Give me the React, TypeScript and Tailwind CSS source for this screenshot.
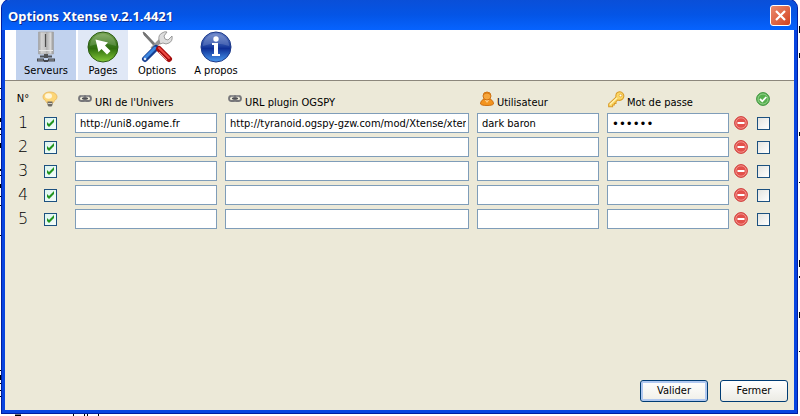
import { useState } from "react";
import type { FC, ReactNode } from "react";

interface Server {
  id: number;
  universe: string;
  plugin: string;
  user: string;
  password: string;
}

const servers: Server[] = [
  {
    id: 1,
    universe: "http://uni8.ogame.fr",
    plugin: "http://tyranoid.ogspy-gzw.com/mod/Xtense/xtense.php",
    user: "dark baron",
    password: "secret",
  },
  { id: 2, universe: "", plugin: "", user: "", password: "" },
  { id: 3, universe: "", plugin: "", user: "", password: "" },
  { id: 4, universe: "", plugin: "", user: "", password: "" },
  { id: 5, universe: "", plugin: "", user: "", password: "" },
];

const ServerIcon: FC = () => (
  <svg width="32" height="32" viewBox="0 0 32 32" aria-hidden="true">
    <defs>
      <linearGradient id="tower" x1="0" x2="1">
        <stop offset="0" stopColor="#9a9a9a" />
        <stop offset="0.2" stopColor="#d2d2d2" />
        <stop offset="0.46" stopColor="#c4c4c4" />
        <stop offset="0.54" stopColor="#b0b0b0" />
        <stop offset="0.8" stopColor="#d8d8d8" />
        <stop offset="1" stopColor="#8d8d8d" />
      </linearGradient>
    </defs>
    <path d="M8.500 1h15v22h-15z" fill="url(#tower)" stroke="#a3a3a3" strokeWidth=".6" />
    <path d="M15.500 3v13" stroke="#4c4c4c" strokeWidth="1.200" />
    <path d="M9 19.500h14" stroke="#e8e8e8" />
    <path d="M14 23h4v4h-4z" fill="#555" />
    <path d="M10 24.500h12v2H10z" fill="#4f5258" />
    <path d="M7 27.500h7v3H7zM14 29h4v2h-4zM18 27.500h7v3h-7z" fill="#43464d" />
    <path d="M8 29h5M19 29h5" stroke="#a9adb5" strokeWidth=".8" />
  </svg>
);

const PagesIcon: FC = () => (
  <svg width="32" height="32" viewBox="0 0 32 32" aria-hidden="true">
    <defs>
      <linearGradient id="green" x1="0" y1="0" x2="0" y2="1">
        <stop offset="0" stopColor="#7ba656" />
        <stop offset="0.45" stopColor="#37761a" />
        <stop offset="0.55" stopColor="#2f6e0d" />
        <stop offset="1" stopColor="#86c93c" />
      </linearGradient>
    </defs>
    <circle cx="16" cy="16" r="15" fill="url(#green)" stroke="#2b5a12" />
    <path d="M3 15a13 12 0 0 1 26 0q-13-5-26 0z" fill="#fff" opacity=".15" />
    <path d="M8.500 8.500L21 11.500l-3 3 5.500 5.500-3.500 3.500-5.500-5.500-3 3z" fill="#fff" />
  </svg>
);

const ToolsIcon: FC = () => (
  <svg width="32" height="32" viewBox="0 0 32 32" aria-hidden="true">
    <path d="M2 1l2 1 15 16-2 1L3 4z" fill="#777" stroke="#555" strokeWidth=".6" />
    <path d="M11 18l9-9" stroke="#999" strokeWidth="4" />
    <path
      d="M18 9q-1-5 3-7 3-2 5-1l-3 4 1 3 3 1 4-4q1 5-3 7-3 2-6 0l-3 1z"
      fill="#ddd"
      stroke="#888"
      strokeWidth=".8"
    />
    <path d="M4 28l11-11" stroke="#173f91" strokeWidth="6" strokeLinecap="round" />
    <path d="M4 27l10-10" stroke="#3d87e0" strokeWidth="3" strokeLinecap="round" />
    <circle cx="4" cy="28" r="1.3" fill="#dfeaff" />
    <path d="M18 18l10 10" stroke="#a60d0d" strokeWidth="6" strokeLinecap="round" />
    <path d="M18 17l10 10" stroke="#ee4a43" strokeWidth="2" strokeLinecap="round" />
    <path d="M18 21l8 8" stroke="#ffb5ae" strokeWidth=".8" />
  </svg>
);

const InfoIcon: FC = () => (
  <svg width="32" height="32" viewBox="0 0 32 32" aria-hidden="true">
    <defs>
      <linearGradient id="blue" x1="0" y1="0" x2="0" y2="1">
        <stop offset="0" stopColor="#6a85ca" />
        <stop offset="0.45" stopColor="#2346a4" />
        <stop offset="0.55" stopColor="#0e2f96" />
        <stop offset="1" stopColor="#4a9af0" />
      </linearGradient>
    </defs>
    <circle cx="16" cy="16" r="15" fill="url(#blue)" stroke="#1b3888" />
    <path d="M3 15a13 12 0 0 1 26 0q-13-5-26 0z" fill="#fff" opacity=".15" />
    <circle cx="16" cy="8" r="2.7" fill="#fff" />
    <path d="M12 12h6v11h2v2h-8v-2h2v-9h-2z" fill="#fff" />
  </svg>
);

const BulbIcon: FC = () => (
  <svg width="16" height="16" viewBox="0 0 16 16" className="inline-block" aria-hidden="true">
    <path
      d="M8 1C4 1 1 3 1 6c0 3 3 3 4 6h6c1-3 4-3 4-6 0-3-3-5-7-5z"
      fill="#fcd678"
      stroke="#e8b55a"
      strokeWidth=".8"
    />
    <ellipse cx="6.5" cy="5" rx="3.5" ry="2.7" fill="#fff6d8" />
    <path d="M5.500 10.500h5v3.500l-1 1.500h-3l-1-1.500z" fill="#6d6a64" />
    <path d="M6 12.500h4" stroke="#d6d2c8" />
  </svg>
);

const LinkIcon: FC = () => (
  <svg width="16" height="16" viewBox="0 0 16 16" aria-hidden="true">
    <g fill="none" strokeWidth="1.800">
      <rect x="2" y="5" width="7" height="5" rx="2.500" stroke="#77777a" />
      <rect x="7" y="5" width="7" height="5" rx="2.500" stroke="#77777a" />
      <path d="M5 7.500h6" stroke="#505054" strokeWidth="1.500" />
      <path d="M4 5h3M9 5h3" stroke="#b4b4b4" strokeWidth=".8" />
    </g>
  </svg>
);

const UserIcon: FC = () => (
  <svg width="16" height="16" viewBox="0 0 16 16" aria-hidden="true">
    <path
      d="M1.500 13c0-3 2-4.500 4-5h5c2 .5 4 2 4 5-1 2-12 2-13 0z"
      fill="#f3941f"
      stroke="#c8690b"
      strokeWidth=".9"
    />
    <path d="M5.500 8.500L8 12l2.500-3.500z" fill="#ffd08a" />
    <circle cx="8" cy="5" r="4" fill="#f6a63d" stroke="#c8690b" strokeWidth=".9" />
    <path d="M4.500 4q3.500-3 7 0-1-3-3.500-3t-3.500 3z" fill="#d87a14" />
  </svg>
);

const KeyIcon: FC = () => (
  <svg width="18" height="18" viewBox="0 0 16 16" aria-hidden="true">
    <path
      d="M9 1.500q3-2 5 .5t0 5q-2 2-4.500 1L8 9.500V11H6.500v1.500H5V14H1.500v-2.500L8 5.500q-.5-2.500 1-4z"
      fill="#fbd765"
      stroke="#d99a26"
      strokeWidth=".9"
    />
    <path d="M2.500 12L9 6" stroke="#fff3b8" />
    <circle cx="12" cy="4" r="1.200" fill="#fff" stroke="#d99a26" strokeWidth=".6" />
  </svg>
);

const ValidIcon: FC = () => (
  <svg width="14" height="14" viewBox="0 0 14 14" className="inline-block" aria-hidden="true">
    <circle cx="7" cy="7" r="6.400" fill="#55b04e" stroke="#3f9440" />
    <circle cx="7" cy="7" r="5" fill="none" stroke="#a4d99d" strokeWidth=".8" />
    <path d="M4 7l2.300 2.300L10.300 5" fill="none" stroke="#fff" strokeWidth="1.800" />
  </svg>
);

const RemoveIcon: FC = () => (
  <svg width="14" height="14" viewBox="0 0 14 14" aria-hidden="true">
    <circle cx="7" cy="7" r="6.400" fill="#e3504b" stroke="#d0413f" />
    <circle cx="7" cy="7" r="5.200" fill="none" stroke="#f5a39c" strokeWidth=".8" />
    <path d="M3.500 7h7" stroke="#fff" strokeWidth="2" />
  </svg>
);

// Dark fragments of the desktop that stay visible around the window
const Desktop: FC = () => (
  <>
    <svg className="absolute top-0 left-0" width="1" height="416" aria-hidden="true">
      <path
        d="M.5 58v1M.5 88v1M.5 99v1M.5 118v4M.5 128v2M.5 134v1M.5 143v5M.5 169v2M.5 175v1M.5 184v4M.5 196v1M.5 205v1M.5 235v1M.5 370v1M.5 375v5M.5 383v1M.5 390v1M.5 396v1"
        stroke="#000"
      />
    </svg>
    <svg className="absolute right-0 top-0" width="2" height="416" aria-hidden="true">
      <path d="M1.500 26v7M1.500 53v5M1.500 132v4M1.500 182v1M1.500 260v7M1.500 276v2M1.500 312v6M1.500 351v1" stroke="#000" />
    </svg>
    <svg className="absolute bottom-0 left-0" width="120" height="2" aria-hidden="true">
      <path d="M15 1.500h6M73 1h1M84 1h1M87 1h1M98 1h1" stroke="#000" strokeWidth="2" />
    </svg>
  </>
);

const tabs: { name: string; icon: ReactNode; style: string }[] = [
  { name: "Serveurs", icon: <ServerIcon />, style: "w-15 bg-[#c1d2ee]" },
  { name: "Pages", icon: <PagesIcon />, style: "w-[50px] bg-[#e0e8f6]" },
  { name: "Options", icon: <ToolsIcon />, style: "w-[54px]" },
  { name: "A propos", icon: <InfoIcon />, style: "w-15" },
];

const Check: FC<{ label: string; checked?: boolean }> = ({ label, checked }) => (
  <span className="relative mx-auto block size-[13px]">
    <input
      type="checkbox"
      aria-label={label}
      defaultChecked={checked}
      className="peer block size-full appearance-none border border-[#1c5180] bg-linear-to-br from-[#e4e4df] to-white checked:from-[#dcf4ee] checked:to-[#f4fcfa]"
    />
    <svg
      viewBox="0 0 13 13"
      className="pointer-events-none absolute inset-0 hidden peer-checked:block"
      aria-hidden="true"
    >
      <path d="M3 5v3l2 2 5-5V2L5 7z" fill="#21951f" />
    </svg>
  </span>
);

const Field: FC<{ label: string; value: string; type?: string }> = ({
  label,
  value,
  type = "text",
}) => (
  <input
    type={type}
    aria-label={label}
    defaultValue={value}
    className={`block h-5 w-full border border-[#7f9db9] bg-white pr-0.5 pl-1 text-black outline-none ${
      type === "password" ? "text-[13px]" : "text-[11px]"
    }`}
  />
);

const Heading: FC<{ icon: ReactNode; children: ReactNode }> = ({ icon, children }) => (
  <span className="flex items-start gap-0.5">
    {icon}
    <span className="pt-1 leading-4">{children}</span>
  </span>
);

const App: FC = () => {
  const [active, setActive] = useState("Serveurs");

  return (
    <div className="relative h-screen bg-white px-0.5 pb-[3px] font-['DejaVu_Sans_Condensed','DejaVu_Sans',sans-serif] text-[11px] text-black">
      <Desktop />
      <main className="relative mr-px flex h-full flex-col rounded-t-lg border-x-3 border-b-3 border-[#0845e0] bg-[#ece9d8] shadow-[0_0_0_1px_#001ea0]">
        <header className="-mx-[3px] flex h-[30px] shrink-0 items-center justify-between rounded-t-lg bg-linear-to-b from-[#0a4fd8] via-[#0455e6] to-[#0663ff] px-1.5">
          <h1 className="pt-1 font-['Noto_Sans',sans-serif] text-[13px] font-bold text-white [text-shadow:1px_1px_#0a2a8c]">
            Options Xtense v.2.1.4421
          </h1>
          <button
            type="button"
            aria-label="Fermer la fenêtre"
            className="flex size-[21px] items-center justify-center rounded-[3px] border border-white bg-linear-to-br from-[#ea8a6c] to-[#d3401a]"
          >
            <svg width="13" height="13" viewBox="0 0 13 13" aria-hidden="true">
              <path d="M2 2l9 9M11 2l-9 9" stroke="#fff" strokeWidth="2.200" />
            </svg>
          </button>
        </header>

        <nav className="flex h-[51px] shrink-0 gap-0.5 border-b border-[#8c877c] bg-white pl-[11px]">
          {tabs.map((tab) => (
            <button
              key={tab.name}
              type="button"
              aria-pressed={active === tab.name}
              onClick={() => setActive(tab.name)}
              className={`flex flex-col items-center whitespace-nowrap pt-px ${tab.style}`}
            >
              {tab.icon}
              <span className="leading-4">{tab.name}</span>
            </button>
          ))}
        </nav>

        <section className="grow pt-2.5 pr-[17px] pl-1">
          <table className="w-full table-fixed">
            <colgroup>
              <col className="w-7" />
              <col className="w-[26px]" />
              <col className="w-[158px]" />
              <col />
              <col className="w-[130px]" />
              <col className="w-[130px]" />
              <col className="w-4" />
              <col className="w-7" />
            </colgroup>
            <thead>
              <tr className="h-5 text-left [&>th]:p-0 [&>th]:align-top [&>th]:font-normal">
                <th className="text-center leading-4">N°</th>
                <th className="text-center leading-4" aria-label="Actif">
                  <BulbIcon />
                </th>
                <th>
                  <span className="block pl-3.5">
                    <Heading icon={<LinkIcon />}>URl de l'Univers</Heading>
                  </span>
                </th>
                <th>
                  <span className="block pl-1.5">
                    <Heading icon={<LinkIcon />}>URL plugin OGSPY</Heading>
                  </span>
                </th>
                <th>
                  <span className="block pl-1.5">
                    <Heading icon={<UserIcon />}>Utilisateur</Heading>
                  </span>
                </th>
                <th>
                  <span className="block pl-1">
                    <Heading icon={<KeyIcon />}>Mot de passe</Heading>
                  </span>
                </th>
                <th aria-label="Supprimer" />
                <th className="text-center leading-4" aria-label="Valide">
                  <ValidIcon />
                </th>
              </tr>
            </thead>
            <tbody>
              {servers.map((server) => (
                <tr key={server.id} className="h-6 [&>td]:p-0">
                  <td className="text-center font-['DejaVu_Sans',sans-serif] text-base leading-5 font-extralight">
                    {server.id}
                  </td>
                  <td>
                    <Check label={`Activer le serveur ${server.id}`} checked />
                  </td>
                  <td>
                    <div className="pr-1 pl-3">
                      <Field label="URL de l'univers" value={server.universe} />
                    </div>
                  </td>
                  <td>
                    <div className="px-1">
                      <Field label="URL du plugin OGSPY" value={server.plugin} />
                    </div>
                  </td>
                  <td>
                    <div className="px-1">
                      <Field label="Utilisateur" value={server.user} />
                    </div>
                  </td>
                  <td>
                    <div className="px-1">
                      <Field label="Mot de passe" value={server.password} type="password" />
                    </div>
                  </td>
                  <td>
                    <button type="button" aria-label="Supprimer" className="mx-auto block">
                      <RemoveIcon />
                    </button>
                  </td>
                  <td>
                    <Check label={`Serveur ${server.id} valide`} />
                  </td>
                </tr>
              ))}
            </tbody>
          </table>
        </section>

        <footer className="flex shrink-0 justify-end gap-3 pr-1.5 pb-2">
          <button
            type="button"
            className="h-[22px] w-17 rounded-[3px] border border-[#003c74] bg-linear-to-b from-white to-[#f0efe8] shadow-[inset_0_0_0_2px_#b0c8f0]"
          >
            Valider
          </button>
          <button
            type="button"
            className="h-[22px] w-17 rounded-[3px] border border-[#003c74] bg-linear-to-b from-white to-[#ecebe4]"
          >
            Fermer
          </button>
        </footer>
      </main>
    </div>
  );
};

export default App;
